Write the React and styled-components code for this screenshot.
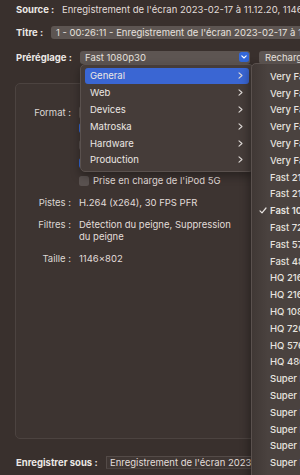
import styled, { createGlobalStyle } from "styled-components";

const GlobalStyle = createGlobalStyle`
  html, body {
    margin: 0;
    padding: 0;
    background: #39302d;
  }
  body {
    font-family: Inter, "Noto Sans", sans-serif;
    font-size: 9.5px;
    color: #e2ddda;
    overflow: hidden;
  }
`;

const Window = styled.div`
  position: relative;
  width: 300px;
  height: 475px;
  overflow: hidden;
  box-sizing: border-box;
  padding: 3px 0 0 16px;
  display: flex;
  flex-direction: column;
`;

const TopRow = styled.div`
  display: flex;
  align-items: center;
  height: ${(p) => p.$h || 13}px;
  margin-top: ${(p) => p.$mt || 0}px;
  white-space: nowrap;
  flex-shrink: 0;
`;

const Label = styled.span`
  flex: 0 0 ${(p) => p.$w}px;
  font-weight: 700;
  color: #ece8e5;
`;

const Value = styled.span`
  color: #e2ddda;
`;

const Popup = styled.div`
  position: relative;
  box-sizing: border-box;
  flex: 0 0 ${(p) => p.$w}px;
  width: ${(p) => p.$w}px;
  height: 13px;
  display: flex;
  align-items: center;
  padding-left: 5px;
  background: #5d5552;
  border-radius: 3px;
  color: #e6e1de;
  overflow: hidden;
`;

const PopupArrow = styled.span`
  position: absolute;
  right: 1px;
  top: 1.5px;
  width: 10px;
  height: 10px;
  border-radius: 2.5px;
  background: #3468d8;
  display: flex;
  align-items: center;
  justify-content: center;
`;

const Button = styled.div`
  box-sizing: border-box;
  flex: 0 0 70px;
  margin-left: 9px;
  height: 13px;
  display: flex;
  align-items: center;
  padding-left: 6px;
  background: #5d5552;
  border-radius: 3px;
  color: #e6e1de;
`;

const TextField = styled.div`
  box-sizing: border-box;
  flex: 0 0 146px;
  height: 13px;
  display: flex;
  align-items: center;
  padding-left: 3px;
  background: #3f3633;
  border: 1px solid #544b48;
  border-bottom-color: #4a4240;
  color: #e2ddda;
  overflow: hidden;
`;

const Box = styled.div`
  flex-shrink: 0;
  margin-top: 19px;
  margin-left: -1px;
  width: 320px;
  height: 356px;
  box-sizing: border-box;
  border: 1px solid #4c4340;
  border-radius: 5px;
  background: #3d3431;
  padding-top: 22px;
  display: flex;
  flex-direction: column;
`;

const FieldRow = styled.div`
  display: grid;
  grid-template-columns: 55px 1fr;
  column-gap: 8px;
  align-items: ${(p) => (p.$top ? "start" : "center")};
  margin-top: ${(p) => p.$mt || 0}px;
  min-height: 12px;
  line-height: 12px;
  white-space: nowrap;
`;

const FieldLabel = styled.span`
  text-align: right;
  color: #dcd7d4;
`;

const CheckLine = styled.div`
  display: flex;
  align-items: center;
  gap: 4px;
  color: #e2ddda;
`;

const CheckBox = styled.span`
  width: 10px;
  height: 10px;
  border-radius: 2.5px;
  background: ${(p) => (p.$on ? "#3468d8" : "#5a5250")};
  display: flex;
  align-items: center;
  justify-content: center;
`;

const Menu = styled.div`
  position: absolute;
  left: 80px;
  top: 64px;
  width: 174px;
  box-sizing: border-box;
  padding: 2.5px 0;
  background: #453c39;
  border: 1px solid #5a514e;
  border-radius: 5px;
  box-shadow: 0 4px 10px rgba(0, 0, 0, 0.35);
`;

const MenuItem = styled.div`
  height: 16.8px;
  margin: 0 4px;
  padding: 0 6px 0 5px;
  border-radius: 3px;
  display: flex;
  align-items: center;
  justify-content: space-between;
  background: ${(p) => (p.$active ? "#3a66d3" : "transparent")};
  color: #ebe7e4;
`;

const SubMenu = styled.div`
  position: absolute;
  left: 251px;
  top: 63px;
  width: 130px;
  height: 430px;
  box-sizing: border-box;
  padding-top: 4px;
  background: linear-gradient(to right, #403835 0, #4a423f 16px);
  border: 1px solid #5a514e;
  border-radius: 5px;
  box-shadow: -2px 4px 10px rgba(0, 0, 0, 0.35);
`;

const SubItem = styled.div`
  position: relative;
  height: 16.8px;
  padding-left: 18px;
  display: flex;
  align-items: center;
  white-space: nowrap;
  color: #e6e2df;
  font-weight: ${(p) => (p.$checked ? 600 : 500)};
`;

const Tick = styled.svg`
  position: absolute;
  left: 7px;
  top: 5px;
`;

const Chevron = () => (
  <svg width="5" height="7" viewBox="0 0 5 7">
    <path d="M1 0.8 L4 3.5 L1 6.2" fill="none" stroke="#e0dbd8" strokeWidth="1.1" strokeLinecap="round" strokeLinejoin="round" />
  </svg>
);

const DownArrow = () => (
  <svg width="6" height="4" viewBox="0 0 6 4">
    <path d="M0.8 0.8 L3 3 L5.2 0.8" fill="none" stroke="#fff" strokeWidth="1.1" strokeLinecap="round" strokeLinejoin="round" />
  </svg>
);

const SmallCheck = () => (
  <svg width="7" height="6" viewBox="0 0 7 6">
    <path d="M1 3.2 L2.8 5 L6 1" fill="none" stroke="#fff" strokeWidth="1.2" strokeLinecap="round" strokeLinejoin="round" />
  </svg>
);

const categories = ["General", "Web", "Devices", "Matroska", "Hardware", "Production"];

const presets = [
  "Very Fast 2160p60 4K AV1",
  "Very Fast 2160p60 4K HEVC",
  "Very Fast 1080p30",
  "Very Fast 720p30",
  "Very Fast 576p25",
  "Very Fast 480p30",
  "Fast 2160p60 4K AV1",
  "Fast 2160p60 4K HEVC",
  "Fast 1080p30",
  "Fast 720p30",
  "Fast 576p25",
  "Fast 480p30",
  "HQ 2160p60 4K AV1 Surround",
  "HQ 2160p60 4K HEVC Surround",
  "HQ 1080p30 Surround",
  "HQ 720p30 Surround",
  "HQ 576p25 Surround",
  "HQ 480p30 Surround",
  "Super HQ 2160p60 4K AV1 Surround",
  "Super HQ 2160p60 4K HEVC Surround",
  "Super HQ 1080p30 Surround",
  "Super HQ 720p30 Surround",
  "Super HQ 576p25 Surround",
  "Super HQ 480p30 Surround",
];

// the first three option rows sit under the open menu: only their boxes peek out
const options = [
  { text: "", on: true },
  { text: "", on: false },
  { text: "", on: true },
  { text: "Prise en charge de l'iPod 5G", on: false },
];

export default function App() {
  return (
    <>
      <GlobalStyle />
      <Window>
        <TopRow>
          <Label $w={46}>Source :</Label>
          <Value>Enregistrement de l'écran 2023-02-17 à 11.12.20, 1146x802</Value>
        </TopRow>

        <TopRow $mt={10}>
          <Label $w={35}>Titre :</Label>
          <Popup $w={270}>1 - 00:26:11 - Enregistrement de l'écran 2023-02-17 à 11.12.20</Popup>
        </TopRow>

        <TopRow $mt={11} $h={14}>
          <Label $w={64}>Préréglage :</Label>
          <Popup $w={170}>
            Fast 1080p30
            <PopupArrow>
              <DownArrow />
            </PopupArrow>
          </Popup>
          <Button>Recharger</Button>
        </TopRow>

        <Box>
          <FieldRow>
            <FieldLabel>Format :</FieldLabel>
            <Popup $w={100} />
          </FieldRow>
          {options.map((o, i) => (
            <FieldRow key={i} $mt={i === 0 ? 2.5 : 5.7}>
              <span />
              <CheckLine>
                <CheckBox $on={o.on}>{o.on && <SmallCheck />}</CheckBox>
                {o.text}
              </CheckLine>
            </FieldRow>
          ))}
          <FieldRow $mt={10}>
            <FieldLabel>Pistes :</FieldLabel>
            <Value>H.264 (x264), 30 FPS PFR</Value>
          </FieldRow>
          <FieldRow $mt={10.7} $top>
            <FieldLabel>Filtres :</FieldLabel>
            <Value>
              Détection du peigne, Suppression
              <br />
              du peigne
            </Value>
          </FieldRow>
          <FieldRow $mt={10}>
            <FieldLabel>Taille :</FieldLabel>
            <Value>1146x802</Value>
          </FieldRow>
        </Box>

        <TopRow $mt={16} $h={14}>
          <Label $w={90}>Enregistrer sous :</Label>
          <TextField>Enregistrement de l'écran 2023-02-17 à 11.12.20.mp4</TextField>
        </TopRow>

        <Menu>
          {categories.map((c, i) => (
            <MenuItem key={c} $active={i === 0}>
              {c}
              <Chevron />
            </MenuItem>
          ))}
        </Menu>

        <SubMenu>
          {presets.map((p) => (
            <SubItem key={p} $checked={p === "Fast 1080p30"}>
              {p === "Fast 1080p30" && (
                <Tick width="8" height="7" viewBox="0 0 8 7">
                  <path d="M1 3.8 L3 5.8 L7 1" fill="none" stroke="#e6e2df" strokeWidth="1.2" strokeLinecap="round" strokeLinejoin="round" />
                </Tick>
              )}
              {p}
            </SubItem>
          ))}
        </SubMenu>
      </Window>
    </>
  );
}
